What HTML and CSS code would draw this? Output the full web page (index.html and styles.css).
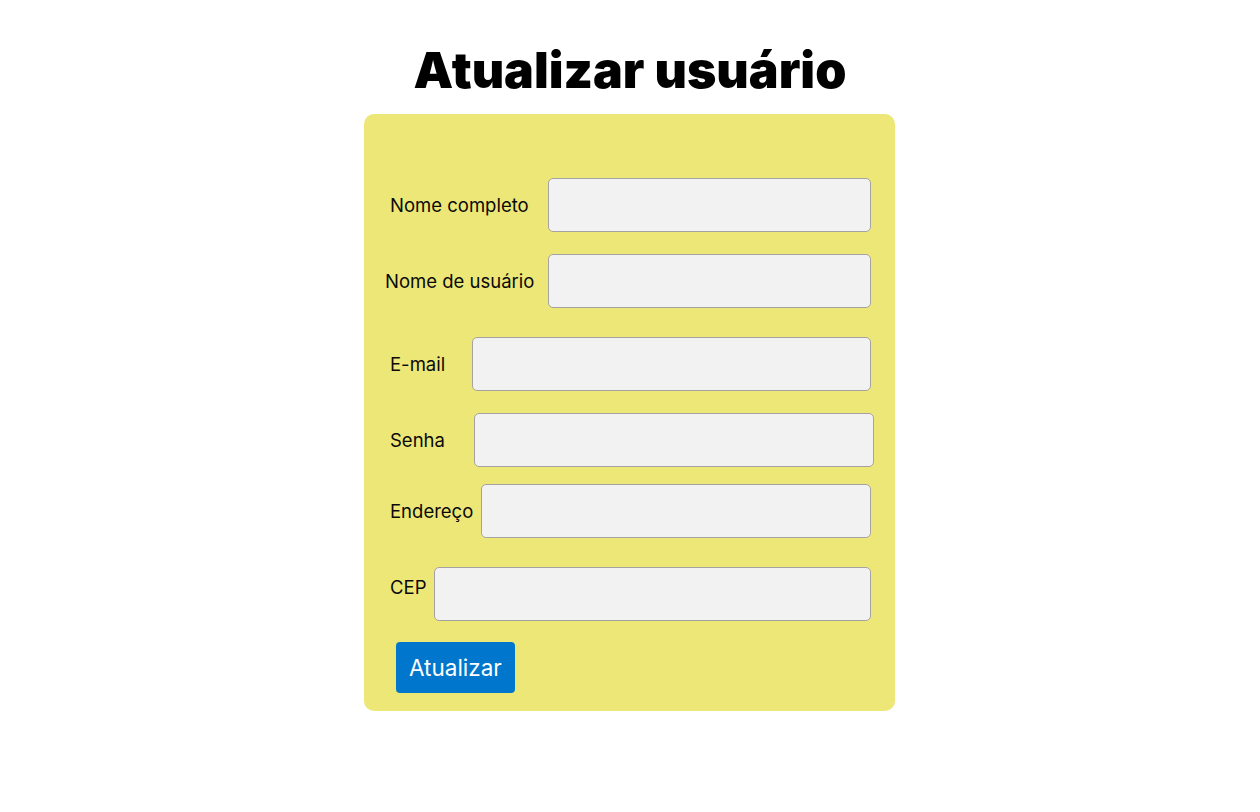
FILE: index.html
```html
<!DOCTYPE html>
<html lang="pt-BR">
<head>
<meta charset="utf-8">
<title>Atualizar usuário</title>
<link rel="stylesheet" href="styles.css">
</head>
<body>
<main class="page">
  <h1 class="title">Atualizar usuário</h1>
  <form class="card">
    <div class="row row-1">
      <label class="label">Nome completo</label>
      <input class="field" type="text">
    </div>
    <div class="row row-2">
      <label class="label">Nome de usuário</label>
      <input class="field" type="text">
    </div>
    <div class="row row-3">
      <label class="label">E-mail</label>
      <input class="field" type="email">
    </div>
    <div class="row row-4">
      <label class="label">Senha</label>
      <input class="field" type="password">
    </div>
    <div class="row row-5">
      <label class="label">Endereço</label>
      <input class="field" type="text">
    </div>
    <div class="row row-6">
      <label class="label">CEP</label>
      <input class="field" type="text">
    </div>
    <div class="actions">
      <button class="btn" type="button">Atualizar</button>
    </div>
  </form>
</main>
</body>
</html>
```
FILE: styles.css
```css
* { box-sizing: border-box; }

body {
  margin: 0;
  background: #ffffff;
  font-family: "Inter", "Liberation Sans", sans-serif;
  color: #0a0a0a;
}

.page {
  display: flex;
  flex-direction: column;
  align-items: center;
}

.title {
  margin: 40px 0 14px;
  font-size: 50px;
  font-weight: 900;
  line-height: normal;
  color: #000000;
  letter-spacing: 0;
}

.card {
  width: 531px;
  margin-right: 1px;
  background: #ede777;
  border-radius: 10px;
  padding: 64px 24px 18px 26px;
  display: flex;
  flex-direction: column;
}

.row {
  display: flex;
  align-items: center;
}

.label {
  flex: none;
  font-size: 18.5px;
  line-height: 22px;
  white-space: nowrap;
}

.field {
  flex: 1;
  height: 54px;
  min-width: 0;
  background: #f2f2f2;
  border: 1px solid #a7a2a2;
  border-radius: 5px;
  font: inherit;
}

.row-1 .label { width: 158px; }

.row-2 { margin-top: 22px; }
.row-2 .label { width: 163px; margin-left: -5px; }

.row-3 { margin-top: 29px; }
.row-3 .label { width: 82px; }

.row-4 { margin-top: 22px; margin-right: -3px; }
.row-4 .label { width: 84px; }

.row-5 { margin-top: 17px; }
.row-5 .label { width: 91px; }

.row-6 { margin-top: 29px; }
.row-6 .label { width: 44px; padding-bottom: 14px; }

.actions {
  margin-top: 21px;
  padding-left: 6px;
  display: flex;
}

.btn {
  height: 51px;
  padding: 0 13px;
  background: #0077cc;
  color: #ffffff;
  border: none;
  border-radius: 4px;
  font-family: "Inter", "Liberation Sans", sans-serif;
  font-size: 22.5px;
  line-height: 27px;
}
```
